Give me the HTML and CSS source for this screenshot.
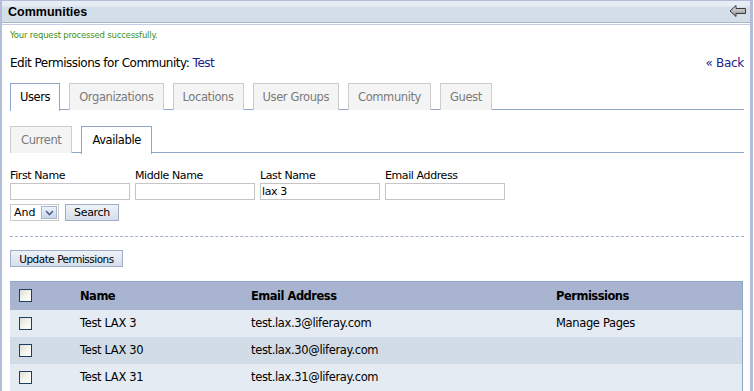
FILE: index.html
```html
<!DOCTYPE html>
<html>
<head>
<meta charset="utf-8">
<link rel="stylesheet" href="styles.css">
</head>
<body>
<div class="portlet">
  <div class="portlet-title">
    <span class="title-text">Communities</span>
    <svg class="back-icon" width="18" height="14" viewBox="0 0 18 14">
      <defs><linearGradient id="g" x1="0" y1="0" x2="0" y2="1"><stop offset="0" stop-color="#e8e8e8"/><stop offset="1" stop-color="#8a8a8a"/></linearGradient></defs>
      <path d="M1 7 L7 1.5 L7 4.5 L16.5 4.5 L16.5 9.5 L7 9.5 L7 12.5 Z" fill="url(#g)" stroke="#3a3a3a" stroke-width="1"/>
    </svg>
  </div>
  <div class="portlet-content">
    <div class="success">Your request processed successfully.</div>
    <div class="heading-row">
      <div class="heading">Edit Permissions for Community: <span class="link">Test</span></div>
      <a class="back link">« Back</a>
    </div>
    <div class="tabs">
      <div class="tab active">Users</div>
      <div class="tab">Organizations</div>
      <div class="tab">Locations</div>
      <div class="tab">User Groups</div>
      <div class="tab">Community</div>
      <div class="tab">Guest</div>
    </div>
    <div class="tabs sub">
      <div class="tab">Current</div>
      <div class="tab active">Available</div>
    </div>
    <div class="search-fields">
      <label class="field"><span>First Name</span><input class="text" type="text"></label>
      <label class="field"><span>Middle Name</span><input class="text" type="text"></label>
      <label class="field"><span>Last Name</span><input class="text" type="text" value="lax 3"></label>
      <label class="field"><span>Email Address</span><input class="text" type="text"></label>
    </div>
    <div class="search-row">
      <div class="select"><span class="sel-val">And</span><span class="sel-btn"><svg width="9" height="6" viewBox="0 0 9 6"><path d="M1 1 L4.5 4.5 L8 1" fill="none" stroke="#4d6185" stroke-width="1.6"/></svg></span></div>
      <button class="btn">Search</button>
    </div>
    <div class="separator"></div>
    <button class="btn update">Update Permissions</button>
    <table class="results">
      <thead>
        <tr><th class="c-check"><span class="cb"></span></th><th class="c-name">Name</th><th class="c-email">Email Address</th><th class="c-perm">Permissions</th></tr>
      </thead>
      <tbody>
        <tr><td class="c-check"><span class="cb"></span></td><td>Test LAX 3</td><td>test.lax.3@liferay.com</td><td>Manage Pages</td></tr>
        <tr class="alt"><td class="c-check"><span class="cb"></span></td><td>Test LAX 30</td><td>test.lax.30@liferay.com</td><td></td></tr>
        <tr><td class="c-check"><span class="cb"></span></td><td>Test LAX 31</td><td>test.lax.31@liferay.com</td><td></td></tr>
      </tbody>
    </table>
  </div>
</div>
</body>
</html>
```
FILE: styles.css
```css
* { box-sizing: border-box; }
html, body { margin: 0; padding: 0; background: #fff; }
body { font-family: "DejaVu Sans", "Liberation Sans", sans-serif; font-size: 11px; color: #000; width: 754px; height: 391px; overflow: hidden; }
.portlet { width: 753px; border: 1px solid #b4bdd6; border-left-width: 2px; border-right-width: 3px; border-bottom: none; height: 400px; }
.portlet-title { height: 22px; display: flex; align-items: center; justify-content: space-between; padding: 0 3px 0 6px; background: linear-gradient(#e7edf5 0, #e7edf5 5px, #d5dfe9 6px, #d3dde8 100%); border-bottom: 1px solid #a9b4d2; }
.title-text { font-family: "Liberation Sans", sans-serif; font-weight: bold; font-size: 12.5px; }
.back-icon { display: block; margin-top: -1px; }
.portlet-content { padding: 0 6px 0 8px; margin-top: 1px; border-top: 1px solid #c6cde2; }
.success { color: #3d8f1c; font-size: 8.5px; letter-spacing: -0.2px; padding-top: 5px; height: 20px; }
.heading-row { display: flex; justify-content: space-between; align-items: baseline; height: 26px; padding-top: 11px; font-size: 12px; }
.heading { font-size: 12px; letter-spacing: -0.5px; }
.link { color: #22208d; }
.back { text-decoration: none; letter-spacing: -0.3px; }
.tabs { display: flex; gap: 9px; border-bottom: 1px solid #8fa6c9; margin-top: 12px; height: 27px; width: 734px; }
.tab { height: 27px; border: 1px solid #cccccc; border-bottom: none; background: #f4f4f4; color: #7a7a7a; padding: 0 9px; line-height: 27px; font-size: 11.5px; letter-spacing: -0.4px; }
.tab.active { background: #fff; color: #000; border-color: #8fa6c9; height: 28px; margin-bottom: -1px; }
.tabs.sub { margin-top: 16px; }
.tabs.sub .tab { padding: 0 10px; }
.search-fields { display: flex; gap: 5px; margin-top: 16px; }
.field { display: flex; flex-direction: column; font-size: 11px; letter-spacing: -0.4px; }
.field span { height: 14px; line-height: 13px; }
.text { width: 120px; height: 17px; border: 1px solid #c5c5c5; margin: 0; padding: 0 1px; font-family: "DejaVu Sans", sans-serif; font-size: 11px; letter-spacing: -0.4px; }
.search-row { display: flex; gap: 6px; margin-top: 4px; align-items: center; }
.select { width: 49px; height: 17px; border: 1px solid #c9c9c9; display: flex; align-items: center; justify-content: space-between; padding: 0 1px 0 3px; font-size: 11px; }
.sel-btn { width: 16px; height: 13px; border: 1px solid #a5b6d3; background: linear-gradient(#eef3fa, #c9d6ea); display: flex; align-items: center; justify-content: center; }
.btn { height: 17px; border: 1px solid #9fadcb; background: linear-gradient(#eef2f8, #d5deeb); font-family: "DejaVu Sans", sans-serif; font-size: 11px; letter-spacing: -0.3px; padding: 0 8px; margin: 0; color: #000; white-space: nowrap; }
.separator { border-top: 1px dashed #a0b0c8; margin-top: 15px; width: 734px; }
.btn.update { margin-top: 13px; display: block; width: 113px; padding: 0 4px; font-size: 10.5px; letter-spacing: -0.5px; }
.results { width: 733px; border-collapse: collapse; margin-top: 14px; }
.results th { background: #a8b4d0; height: 28px; text-align: left; font-weight: bold; font-size: 11.5px; border-top: 1px solid #8fa6c9; letter-spacing: -0.5px; padding: 0; }
.results td { height: 27px; padding: 0; font-size: 11.5px; letter-spacing: -0.35px; }
.results tbody tr { background: #e4ebf3; }
.results tbody tr.alt { background: #d1dce7; }
.results th.c-perm { border-right: 1px solid #8fa6c9; }
.results tbody td:last-child { border-right: 1px solid #8fa6c9; }
.c-check { width: 70px; padding-left: 9px !important; }
.c-name { width: 171px; }
.c-email { width: 305px; }
.cb { display: block; width: 13px; height: 13px; border: 1px solid #1e3f63; background: linear-gradient(135deg, #dcdcd4 0%, #f4f4ee 50%, #fff 100%); }
```
